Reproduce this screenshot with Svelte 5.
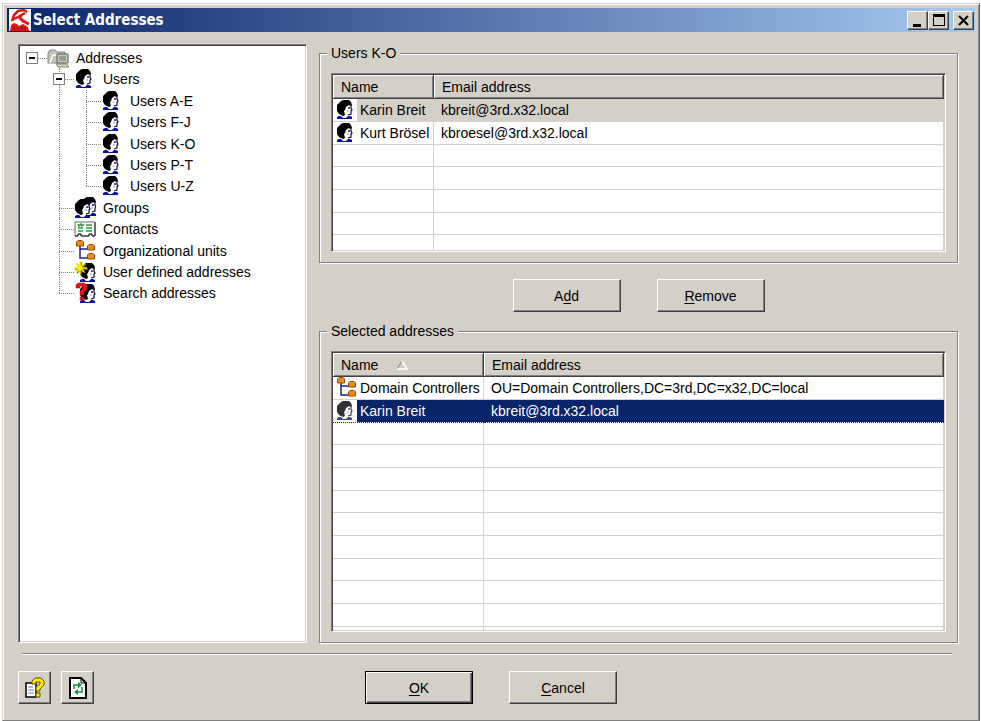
<script lang="ts">
  type Row = { name: string; email: string; icon: string };
  type Node = { label: string; icon: string; level: number; open?: boolean; last?: boolean };

  const nodes: Node[] = [
    { label: 'Addresses', icon: 'folder', level: 0, open: true, last: true },
    { label: 'Users', icon: 'user', level: 1, open: true },
    { label: 'Users A-E', icon: 'user', level: 2 },
    { label: 'Users F-J', icon: 'user', level: 2 },
    { label: 'Users K-O', icon: 'user', level: 2 },
    { label: 'Users P-T', icon: 'user', level: 2 },
    { label: 'Users U-Z', icon: 'user', level: 2, last: true },
    { label: 'Groups', icon: 'group', level: 1 },
    { label: 'Contacts', icon: 'contact', level: 1 },
    { label: 'Organizational units', icon: 'unit', level: 1 },
    { label: 'User defined addresses', icon: 'custom', level: 1 },
    { label: 'Search addresses', icon: 'search', level: 1, last: true }
  ];

  const users: Row[] = [
    { name: 'Karin Breit', email: 'kbreit@3rd.x32.local', icon: 'user' },
    { name: 'Kurt Brösel', email: 'kbroesel@3rd.x32.local', icon: 'user' }
  ];

  const chosen: Row[] = [
    { name: 'Domain Controllers', email: 'OU=Domain Controllers,DC=3rd,DC=x32,DC=local', icon: 'unit' },
    { name: 'Karin Breit', email: 'kbreit@3rd.x32.local', icon: 'user' }
  ];

  let userIndex = $state(0);
  let chosenIndex = $state(1);
</script>

{#snippet head()}
  <path d="M9 6h7l1 5-1 4-3 1v3H7l-1-5z" fill="#fff" />
  <path d="M6 2l2-1h6l2 2 1 3-2 1-1-1-3 2-1 3-1 1 1 4-2 1-4-2-2-3V6z" fill="#000" />
  <path d="M16 5v4l1 2-1 1v3l-3 1" fill="none" stroke="#111" stroke-width="1.2" />
  <path d="M13 8h2v2h-2z" fill="#4a4ae0" />
  <path d="M12 12h2" stroke="#99c" />
  <path d="M2 20v-2l2-1h2l2 2h3l2-2h2l2 1v2z" fill="#0c0cb4" />
{/snippet}

{#snippet icon(kind: string)}
  <svg class="icon" viewBox="0 0 22 22" aria-hidden="true">
    {#if kind === 'folder'}
      <path d="M1 16V6l2-3h5l2 2h8v11z" fill="#c3c3b9" stroke="#85857c" />
      <path d="M3 16L6 8h5" fill="none" stroke="#fbfbf5" stroke-width="1.5" />
      <path d="M10 7h11v9H10z" fill="#c8c8bc" stroke="#555" />
      <path d="M12 9h7v5h-7z" fill="#94a094" />
      <path d="M9 17h11l2 3H11z" fill="#d8d5bd" stroke="#8b8775" />
    {:else if kind === 'user'}
      {@render head()}
    {:else if kind === 'group'}
      <g transform="translate(5 -1)">{@render head()}</g>
      <g transform="translate(-1 1)">{@render head()}</g>
    {:else if kind === 'contact'}
      <path d="M1 4h20v14h-3v-2h-3v2H7v-2H4v2H1z" fill="#fff" stroke="#56765c" />
      <path d="M21 4v14h-3v-2h-3v2H7v-2H4v2H1" fill="none" stroke="#222" />
      <path d="M4 6l1 2 2-2 1 2 2-2M4 10h5M4 13h5M12 7h6M12 10h6M12 13h6" fill="none" stroke="#2a9a43" stroke-width="1.5" />
    {:else if kind === 'unit'}
      <path d="M6 6v12h8M6 9h8" fill="none" stroke="#1e1e9a" stroke-width="1.5" />
      <g fill="#f08a18" stroke="#8f4c08">
        <path d="M2.500 2l1.500-1.500h4L9.500 2v4h-7z" />
        <path d="M13.500 6l1.500-1.500h4l1.500 1.500v4h-7z" />
        <path d="M13.500 15l1.500-1.500h4l1.500 1.500v4h-7z" />
      </g>
    {:else if kind === 'custom'}
      <g transform="translate(4 1)">{@render head()}</g>
      <path d="M7 1v13M1 8h13M3 3l8 9M12 3L3 12" fill="none" stroke="#776f00" stroke-width="1.500" />
      <path d="M6 0v13M0 7h13M2 2l8 9M11 2L2 11" fill="none" stroke="#fff000" stroke-width="1.500" />
    {:else if kind === 'search'}
      <g transform="translate(4 1)">{@render head()}</g>
      <path d="M2 6V3l2-2h6l3 2v4l-3 3v3H6V9l3-3V4H6v2zM6 15h4v3H6z" fill="#f01010" stroke="#b00000" stroke-width=".5" />
    {/if}
  </svg>
{/snippet}

{#snippet list(rows: Row[], total: number, selected: number, focused: boolean, pick: (i: number) => void)}
  <div class="list" class:focused>
    <table>
      <thead>
        <tr>
          <th class="name-col" scope="col">
            Name
            {#if focused}
              <svg class="sort" viewBox="0 0 12 10" aria-label="sorted ascending">
                <path d="M1 9L6 1" fill="none" stroke="#808080" />
                <path d="M6 1l5 8H1" fill="none" stroke="#fff" stroke-width="1.500" />
              </svg>
            {/if}
          </th>
          <th scope="col">Email address</th>
        </tr>
      </thead>
      <tbody>
        {#each Array(total) as _, i}
          {#if rows[i]}
            <tr class:selected={i === selected} onclick={() => pick(i)}>
              <td>
                <div class="item">
                  {@render icon(rows[i].icon)}
                  <span>{rows[i].name}</span>
                </div>
              </td>
              <td><div class="email">{rows[i].email}</div></td>
            </tr>
          {:else}
            <tr><td></td><td></td></tr>
          {/if}
        {/each}
      </tbody>
    </table>
  </div>
{/snippet}

<div class="screen">
  <div class="window">
    <header>
      <svg class="logo" viewBox="0 0 22 22" aria-hidden="true">
        <path d="M0 0h22v22H0z" fill="#fff" />
        <path d="M3 12L5 6l4-4 6-1 3 2M3 11l6-3 7-4" fill="none" stroke="#e01515" stroke-width="2.5" />
        <path d="M10 8l4 4 6 3" fill="none" stroke="#e01515" stroke-width="3" />
        <path d="M10 7l2 2 3-5z" fill="#e01515" />
        <path d="M1 22l1-6 3-2 3 1 2 2 4-2 5 3 1 4z" fill="#e01515" />
        <path d="M5 17v4M9 18v3M13 17v4M16 18v3" stroke="#9c0808" fill="none" />
      </svg>
      <h1>Select Addresses</h1>
      <div class="controls">
        <button aria-label="Minimize">
          <svg viewBox="0 0 17 15"><path d="M4 11h8v3H4z" /></svg>
        </button>
        <button aria-label="Maximize">
          <svg viewBox="0 0 17 15"><path d="M3 1h12v12H3zM4 4v8h10V4z" fill-rule="evenodd" /></svg>
        </button>
        <button class="close" aria-label="Close">
          <svg viewBox="0 0 17 15"><path d="M4 3l9 9M13 3l-9 9" stroke="#000" stroke-width="2" /></svg>
        </button>
      </div>
    </header>

    <main>
      <ul class="tree" role="tree" aria-label="Address books">
        {#each nodes as node}
          <li role="treeitem" aria-level={node.level + 1} aria-selected="false" aria-expanded={node.open}>
            {#if node.level > 0}<span class="cell"></span>{/if}
            {#if node.level > 1}<span class="cell line"></span>{/if}
            <span class="cell branch" class:line={node.level > 0} class:last={node.last}>
              {#if node.open}<button class="toggle" aria-label="Collapse {node.label}"></button>{/if}
            </span>
            {@render icon(node.icon)}
            <span class="label">{node.label}</span>
          </li>
        {/each}
      </ul>

      <div class="panels">
        <fieldset>
          <legend>Users K-O</legend>
          {@render list(users, 7, userIndex, false, (i) => (userIndex = i))}
        </fieldset>

        <div class="actions">
          <button class="btn"><span>A<u>d</u>d</span></button>
          <button class="btn"><span><u>R</u>emove</span></button>
        </div>

        <fieldset class="grow">
          <legend>Selected addresses</legend>
          {@render list(chosen, 12, chosenIndex, true, (i) => (chosenIndex = i))}
        </fieldset>
      </div>
    </main>

    <hr />

    <footer>
      <div class="tools">
        <button aria-label="Help">
          <svg viewBox="0 0 22 22">
            <path d="M2 6h10v14H2z" fill="#fff" stroke="#000" stroke-width="1.500" />
            <path d="M4 10h5M4 13h6M4 16h6" stroke="#77a" />
            <path d="M8 6V4l3-3h6l3 3v4l-4 4v2h-4v-4l4-3V5h-4v2H8z" fill="#ffe800" stroke="#5c5400" />
            <path d="M12 16h4v4h-4z" fill="#ffe800" stroke="#5c5400" />
          </svg>
        </button>
        <button aria-label="Refresh">
          <svg viewBox="0 0 22 22">
            <path d="M3 1h11l5 5v15H3z" fill="#fff" stroke="#000" stroke-width="2" />
            <path d="M14 1v5h5" fill="none" stroke="#000" />
            <path d="M7 12V8h4M15 10v5h-4" fill="none" stroke="#12903a" stroke-width="1.500" />
            <path d="M11 5l4 3-4 3zM11 12l-4 3 4 3z" fill="#12903a" />
          </svg>
        </button>
      </div>
      <div class="answers">
        <button class="btn default"><span><u>O</u>K</span></button>
        <button class="btn"><span><u>C</u>ancel</span></button>
      </div>
    </footer>
  </div>
</div>

<style>
  :global(body) {
    margin: 0;
    background: #fff;
  }
  .screen {
    box-sizing: border-box;
    height: 100vh;
    min-height: 560px;
    padding: 3px 1px 0 2px;
    font: 14px/18px "Liberation Sans", Arial, sans-serif;
    color: #000;
  }
  .window {
    box-sizing: border-box;
    height: 100%;
    display: flex;
    flex-direction: column;
    padding: 4px;
    background: #d4d0c8;
    border: 1px solid;
    border-color: #d4d0c8 #606060 #808080 #d4d0c8;
    box-shadow: inset 1px 1px 0 #fff, inset -1px 0 0 #909090;
  }

  /* Title bar */
  header {
    display: flex;
    align-items: center;
    height: 24px;
    padding: 0 1px 0 2px;
    background: linear-gradient(to right, #0a246a, #a6caf0);
  }
  .logo {
    width: 22px;
    height: 22px;
  }
  h1 {
    flex: 1;
    margin: 0 0 0 2px;
    font: bold 15px/20px "DejaVu Sans Condensed", Tahoma, sans-serif;
    color: #fff;
  }
  .controls {
    display: flex;
  }
  button {
    box-sizing: border-box;
    padding: 0;
    font: inherit;
    color: inherit;
    background: #d4d0c8;
    border: 1px solid;
    border-color: #fff #404040 #404040 #fff;
    box-shadow: inset -1px -1px 0 #808080;
  }
  .controls button {
    width: 21px;
    height: 19px;
  }
  .controls svg {
    display: block;
    width: 17px;
    height: 15px;
    margin: 0 auto;
  }
  .controls .close {
    margin-left: 4px;
  }

  main {
    flex: 1;
    min-height: 0;
    display: grid;
    grid-template-columns: minmax(0, 289fr) minmax(0, 639fr);
    grid-template-rows: minmax(0, 1fr);
    gap: 12px;
    padding: 12px 17px 0 11px;
  }

  /* Address tree */
  .tree,
  .list {
    box-sizing: border-box;
    padding: 1px;
    background: #fff;
    border: 1px solid;
    border-color: #808080 #fff #fff #808080;
    box-shadow: inset 1px 1px 0 #404040, inset -1px -1px 0 #d4d0c8;
    overflow: hidden;
  }
  .tree {
    margin: 0;
    padding-top: 2px;
    list-style: none;
  }
  li {
    display: flex;
    height: 21px;
    line-height: 22px;
    white-space: nowrap;
  }
  li:nth-child(5n + 2),
  li:nth-child(5n + 4) {
    height: 22px;
  }
  .cell {
    position: relative;
    flex: none;
    width: 27px;
  }
  .line::before {
    content: "";
    position: absolute;
    left: 12px;
    top: 0;
    bottom: 0;
    border-left: 1px dotted #808080;
  }
  .last.line::before {
    bottom: 50%;
  }
  .branch::after {
    content: "";
    position: absolute;
    left: 12px;
    right: 0;
    top: 50%;
    border-top: 1px dotted #808080;
  }
  .toggle {
    position: absolute;
    z-index: 1;
    left: 6px;
    top: 5px;
    width: 12px;
    height: 12px;
    background: linear-gradient(#000, #000) center / 6px 2px no-repeat #fff;
    border: 1px solid #808080;
    box-shadow: none;
  }
  .icon {
    display: block;
    flex: none;
    width: 22px;
    height: 22px;
  }
  .label {
    padding-left: 7px;
  }

  /* Right-hand groups */
  .panels {
    display: flex;
    flex-direction: column;
    min-height: 0;
  }
  fieldset {
    display: flex;
    flex-direction: column;
    min-width: 0;
    min-height: 0;
    margin: 0;
    padding: 11px 11px 10px;
    border: 1px solid #808080;
    box-shadow: 1px 1px 0 #fff, inset 1px 1px 0 #fff;
  }
  legend {
    margin-left: -4px;
    padding: 0 4px;
    background: #d4d0c8;
  }
  .grow {
    flex: 1;
  }
  .actions {
    display: flex;
    justify-content: center;
    gap: 36px;
    padding: 16px 0 10px;
  }
  .btn {
    width: 108px;
    height: 33px;
  }
  .default {
    border-color: #000;
    box-shadow: inset 1px 1px 0 #fff, inset -1px -1px 0 #404040, inset -2px -2px 0 #808080;
  }
  u {
    text-underline-offset: 2px;
  }

  .list {
    height: 179px;
  }
  .grow .list {
    flex: 1;
    height: auto;
    min-height: 0;
  }
  table {
    width: 100%;
    table-layout: fixed;
    border-collapse: separate;
    border-spacing: 0;
  }
  th {
    box-sizing: border-box;
    height: 24px;
    padding: 0 8px;
    font-weight: normal;
    text-align: left;
    background: #d4d0c8;
    border-right: 1px solid #404040;
    border-bottom: 1px solid #404040;
    box-shadow: inset 1px 1px 0 #fff, inset -1px -1px 0 #808080;
  }
  .name-col {
    width: 101px;
  }
  .focused .name-col {
    width: 151px;
  }
  .sort {
    width: 12px;
    height: 10px;
    margin-left: 14px;
  }
  td {
    box-sizing: border-box;
    height: 23px;
    padding: 0;
    border-right: 1px solid #d4d0c8;
    border-bottom: 1px solid #d4d0c8;
    white-space: nowrap;
    overflow: hidden;
  }
  tr:nth-child(3n) td {
    height: 22px;
  }
  .item {
    display: flex;
    height: 22px;
    padding-left: 2px;
    line-height: 22px;
  }
  .item span {
    flex: 1;
    padding-left: 3px;
  }
  .email {
    height: 22px;
    padding-left: 7px;
    line-height: 22px;
  }
  .selected .item span,
  .selected .email {
    background: #d4d0c8;
  }
  .focused .selected .item span,
  .focused .selected .email {
    background: #0a246a;
    color: #fff;
  }
  .focused .selected td {
    border-bottom: 1px dotted #0a246a;
    border-right-color: #0a246a;
  }
  .focused .selected .icon {
    background: #fff;
    opacity: 0.8;
  }

  hr {
    width: auto;
    height: 0;
    margin: 10px 23px 0 15px;
    border: 0;
    border-top: 1px solid #808080;
    border-bottom: 1px solid #fff;
  }
  footer {
    display: grid;
    grid-template-columns: 1fr auto 1fr;
    padding: 16px 11px 12px;
  }
  .tools {
    display: flex;
    gap: 10px;
  }
  .tools button {
    width: 33px;
    height: 33px;
  }
  .tools svg {
    display: block;
    width: 22px;
    height: 22px;
    margin: 0 auto;
  }
  .answers {
    display: flex;
    gap: 36px;
  }
</style>
